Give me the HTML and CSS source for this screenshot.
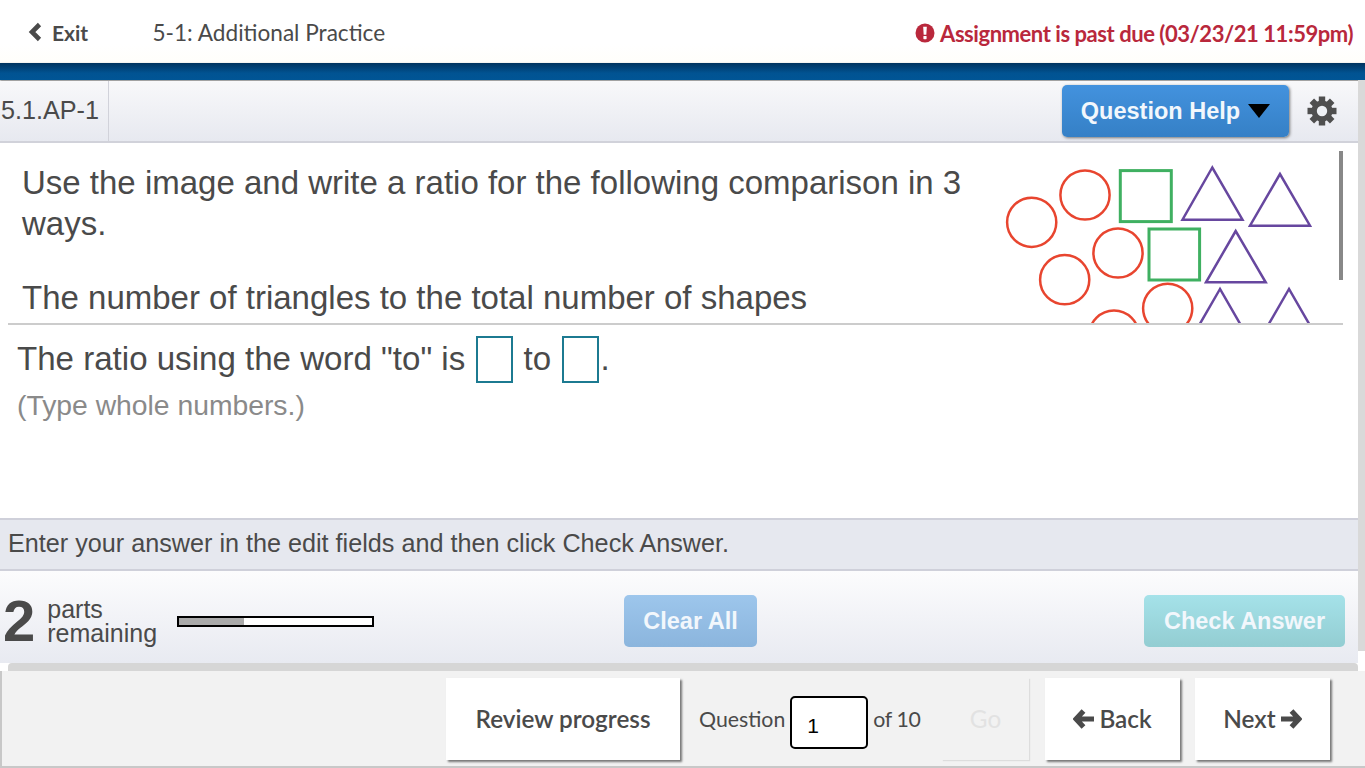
FILE: index.html
```html
<!DOCTYPE html>
<html lang="en">

<head>
  <meta charset="UTF-8">
  <meta name="viewport" content="width=device-width, initial-scale=1.0">
  <title>5-1: Additional Practice</title>
  <link rel="stylesheet" href="styles.css">
</head>

<body>
  <header class="topbar">
    <a class="exit">
      <svg class="exit-icon" width="14" height="20" viewBox="0 0 14 20"><polyline points="11.5,2.5 4,10 11.5,17.5" fill="none" stroke="#4a4a4a" stroke-width="4.6"/></svg>
      Exit
    </a>
    <div class="title">5-1: Additional Practice</div>
    <div class="past-due">
      <svg width="20" height="20" viewBox="0 0 20 20"><circle cx="10" cy="10" r="9.5" fill="#b9283c"/><path d="M8.2 3.8h3.6l-.5 8h-2.6z" fill="#fff"/><rect x="8.4" y="13" width="3.2" height="3.2" rx=".6" fill="#fff"/></svg>
      Assignment is past due (03/23/21 11:59pm)
    </div>
  </header>
  <div class="band"></div>

  <div class="workspace">
    <main class="question">
      <div class="toolbar">
        <div class="question-id">5.1.AP-1</div>
        <button class="help-button">Question Help <span class="caret"></span></button>
        <svg class="gear" width="32" height="32" viewBox="0 0 32 32">
          <g stroke="#4f4f4f" stroke-width="6.4">
            <line x1="16" y1="1.5" x2="16" y2="30.5"/>
            <line x1="1.5" y1="16" x2="30.5" y2="16"/>
            <line x1="5.8" y1="5.8" x2="26.2" y2="26.2"/>
            <line x1="26.2" y1="5.8" x2="5.8" y2="26.2"/>
          </g>
          <circle cx="16" cy="16" r="10.5" fill="#4f4f4f"/>
          <circle cx="16" cy="16" r="5.2" fill="#eef0f4"/>
        </svg>
      </div>

      <section class="prompt">
        <div class="prompt-text">
          <p>Use the image and write a ratio for the following comparison in 3 ways.</p>
          <p>The number of triangles to the total number of shapes</p>
        </div>
        <svg class="shapes" width="330" height="200" viewBox="1000 160 330 200">
          <g fill="none" stroke="#e8452f" stroke-width="2.5">
            <circle cx="1031.7" cy="222.3" r="24.6"/>
            <circle cx="1085" cy="195" r="24.6"/>
            <circle cx="1118" cy="253" r="24.6"/>
            <circle cx="1064.7" cy="279.7" r="24.6"/>
            <circle cx="1167.7" cy="308.3" r="24.6"/>
            <circle cx="1114" cy="335" r="24.6"/>
          </g>
          <g fill="none" stroke="#3fb061" stroke-width="3">
            <rect x="1120.3" y="170.6" width="51" height="51"/>
            <rect x="1149" y="229" width="50.6" height="51"/>
          </g>
          <g fill="none" stroke="#67479f" stroke-width="2.5" stroke-linejoin="miter">
            <polygon points="1212.3,167.5 1182.5,219.7 1242.5,219.7"/>
            <polygon points="1280,174 1250,225.7 1310,225.7"/>
            <polygon points="1235.7,231 1206,282.3 1265.7,282.3"/>
            <polygon points="1220,289 1190,341 1250,341"/>
            <polygon points="1289,289 1259,341 1319,341"/>
          </g>
        </svg>
        <div class="scroll-thumb"></div>
      </section>
      <div class="rule"></div>

      <section class="answer">
        <div class="answer-line">
          The ratio using the word "to" is
          <input class="blank" type="text">
          to
          <input class="blank" type="text">.
        </div>
        <div class="hint">(Type whole numbers.)</div>
      </section>

      <div class="instruction">Enter your answer in the edit fields and then click Check Answer.</div>

      <div class="actions">
        <div class="parts">
          <span class="parts-count">2</span>
          <span class="parts-label">parts<br>remaining</span>
          <div class="progress"><div class="progress-fill"></div></div>
        </div>
        <button class="btn-clear">Clear All</button>
        <button class="btn-check">Check Answer</button>
      </div>
    </main>
    <div class="gutter"></div>
  </div>

  <div class="footer-edge"></div>
  <footer class="footer">
    <button class="nav-button review">Review progress</button>
    <div class="jump">
      <span>Question</span>
      <input class="jump-input" type="text" value="1">
      <span class="jump-total">of 10</span>
    </div>
    <button class="nav-button go">Go</button>
    <button class="nav-button back">
      <svg width="21" height="20" viewBox="0 0 21 20"><path d="M10.5 2 3 10l7.5 8M4 10h17" fill="none" stroke="#4a4a4a" stroke-width="5.2"/></svg>
      Back
    </button>
    <button class="nav-button next">
      Next
      <svg width="21" height="20" viewBox="0 0 21 20"><path d="M10.5 2 18 10l-7.5 8M17 10H0" fill="none" stroke="#4a4a4a" stroke-width="5.2"/></svg>
    </button>
  </footer>
</body>

</html>
```
FILE: styles.css
```css
body {
  margin: 0;
  width: 1365px;
  height: 768px;
  overflow: hidden;
  background: #fff;
  font-family: "Liberation Sans", Arial, sans-serif;
  color: #4a4a4a;
}

button {
  font-family: inherit;
  border: none;
  cursor: pointer;
}

/* top header */
.topbar {
  height: 63px;
  display: flex;
  align-items: center;
  background: linear-gradient(#fff 70%, #fffefa);
  font-family: Lato, sans-serif;
}

.exit {
  display: flex;
  align-items: center;
  gap: 10px;
  width: 125px;
  padding-left: 28px;
  box-sizing: border-box;
  font-size: 21px;
  font-weight: 700;
  padding-top: 1px;
}

.title {
  margin-left: 27.5px;
  padding-top: 1px;
  font-size: 22.6px;
}

.past-due {
  margin-left: auto;
  margin-right: 12px;
  padding-top: 3px;
  display: flex;
  align-items: center;
  gap: 5px;
  color: #b9283c;
  font-size: 22px;
  font-weight: 700;
  letter-spacing: -0.45px;
}

.band {
  height: 17px;
  background: linear-gradient(#00345f, #015392 60%, #005595);
  box-shadow: 0 1px 2px #777;
}

.workspace {
  display: flex;
  height: 583px;
}

.question {
  width: 1358px;
  display: flex;
  flex-direction: column;
}

.gutter {
  width: 7px;
  height: 571px;
  background: #d9d9d9;
}

/* toolbar */
.toolbar {
  height: 60px;
  margin-top: 1px;
  display: flex;
  align-items: center;
  background: linear-gradient(#f8f8fa, #e7e9f0);
  border-bottom: 2px solid #d1d2da;
}

.question-id {
  align-self: stretch;
  width: 109px;
  box-sizing: border-box;
  padding-left: 1px;
  border-right: 1px solid #d1d2da;
  font-size: 25.2px;
  line-height: 59px;
}

.help-button {
  margin-left: auto;
  width: 227px;
  height: 52px;
  margin-right: 17px;
  padding-right: 6px;
  border-radius: 5px;
  background: linear-gradient(#4392de, #3580c6);
  box-shadow: 1px 1px 3px #777;
  color: #f2f7fc;
  font-size: 23.5px;
  font-weight: 700;
  display: flex;
  align-items: center;
  justify-content: center;
  gap: 8px;
}

.caret {
  width: 0;
  height: 0;
  border-left: 11px solid transparent;
  border-right: 11px solid transparent;
  border-top: 14px solid #000;
}

.gear {
  margin-right: 20px;
}

/* question prompt */
.prompt {
  position: relative;
  height: 180px;
  display: flex;
  overflow: hidden;
  box-sizing: border-box;
}

.prompt-text {
  width: 978px;
  padding: 19px 0 0 22px;
  box-sizing: border-box;
  font-size: 33px;
  line-height: 41px;
}

.prompt-text p {
  margin: 0 0 33px;
}

.shapes {
  flex: none;
  margin: 17px 0 0 22px;
}

.scroll-thumb {
  position: absolute;
  left: 1339px;
  top: 8px;
  width: 4px;
  height: 129px;
  background: #888;
}

.rule {
  height: 2px;
  margin: 0 15px 0 8px;
  background: #ccc;
}

/* answer area */
.answer {
  height: 193px;
  box-sizing: border-box;
  padding: 11px 0 0 17px;
}

.answer-line {
  font-size: 33.1px;
  line-height: 46px;
}

.blank {
  width: 37px;
  height: 47px;
  box-sizing: border-box;
  margin: 0 1px 0 2px;
  padding: 0;
  border: 2px solid #1c7a91;
  background: #fff;
  vertical-align: top;
}

.hint {
  margin-top: 5px;
  font-size: 28.3px;
  line-height: 34px;
  color: #8a8a8a;
}

.instruction {
  height: 53px;
  box-sizing: border-box;
  padding-left: 8px;
  background: #e6e8ef;
  border-top: 2px solid #cfd0da;
  border-bottom: 2px solid #cfd0da;
  font-size: 25.2px;
  line-height: 47px;
}

/* parts + buttons */
.actions {
  flex: 1;
  position: relative;
  display: flex;
  align-items: flex-start;
  padding-top: 24px;
  box-sizing: border-box;
  background: linear-gradient(#fcfcfd, #e8eaf1);
}

.parts {
  width: 624px;
  display: flex;
  align-items: center;
  height: 52px;
  box-sizing: border-box;
  padding-left: 3px;
}

.parts-count {
  font-size: 58px;
  font-weight: 700;
  line-height: 52px;
}

.parts-label {
  margin-left: 12px;
  margin-bottom: 1px;
  font-size: 25px;
  line-height: 24px;
}

.progress {
  width: 197px;
  height: 11px;
  box-sizing: border-box;
  margin-left: 20px;
  border: 2px solid #000;
  background: #fff;
}

.progress-fill {
  width: 65px;
  height: 100%;
  background: #aaa;
}

.btn-clear,
.btn-check {
  height: 52px;
  border-radius: 5px;
  color: #f2f7fc;
  font-size: 23.5px;
  font-weight: 700;
}

.btn-clear {
  width: 133px;
  background: linear-gradient(#9dc6ec, #8bb5dd);
}

.btn-check {
  width: 201px;
  margin-left: auto;
  margin-right: 13px;
  background: linear-gradient(#a5e2e9, #93cdd2);
}

/* footer */
.footer-edge {
  height: 8px;
  margin-left: 8px;
  width: 1350px;
  background: #d6d6d6;
  border-radius: 4px 4px 0 0;
}

.footer {
  height: 97px;
  box-sizing: border-box;
  display: flex;
  align-items: flex-start;
  padding: 7px 35px 0 0;
  justify-content: flex-end;
  background: #f2f2f2;
  border-left: 2px solid #c8c8c8;
  border-bottom: 2px solid #c8c8c8;
  font-family: Lato, sans-serif;
}

.nav-button {
  height: 82px;
  padding-bottom: 2px;
  background: #fff;
  box-shadow: 2px 2px 2px #777;
  color: #4a4a4a;
  font-family: Lato, sans-serif;
  font-size: 24.3px;
  font-weight: 600;
  display: flex;
  align-items: center;
  justify-content: center;
  gap: 5px;
}

.review {
  width: 234px;
}

.jump {
  width: 262px;
  height: 82px;
  box-sizing: border-box;
  padding-left: 19px;
  display: flex;
  align-items: center;
  gap: 5px;
  font-size: 21.3px;
}

.jump-total {
  letter-spacing: -0.4px;
}

.jump-input {
  width: 78px;
  height: 53px;
  box-sizing: border-box;
  padding: 6px 0 0 15px;
  border: 2px solid #000;
  border-radius: 5px;
  margin-top: 7px;
  font-family: "Liberation Sans", sans-serif;
  font-size: 21px;
  color: #000;
}

.go {
  width: 87px;
  background: #f2f2f2;
  box-shadow: 1px 1px 1px #ddd;
  color: #e2e2e2;
  font-weight: 400;
}

.back {
  width: 135px;
  margin-left: 16px;
}

.next {
  width: 135px;
  margin-left: 15px;
}
```
